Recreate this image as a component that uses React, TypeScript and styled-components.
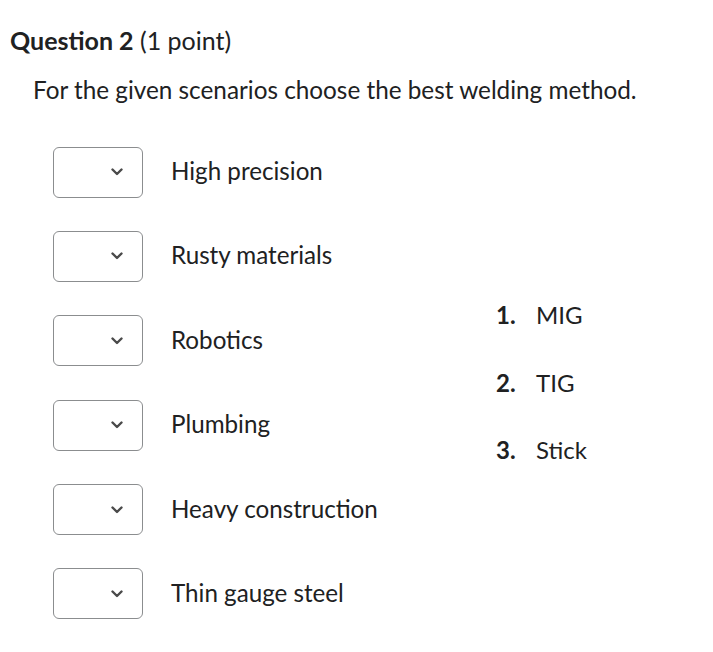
import React from "react";
import styled, { createGlobalStyle } from "styled-components";

const Global = createGlobalStyle`
  html, body { margin: 0; padding: 0; background: #fff; }
  body { font-family: Lato, "Noto Sans", sans-serif; color: #202122; }
`;

const Page = styled.div`
  width: 713px;
  height: 652px;
  box-sizing: border-box;
  padding: 24px 0 0 10px;
`;

const Title = styled.h2`
  margin: 0;
  font-size: 25px;
  line-height: 32px;
  font-weight: 400;
  color: #202122;
  b { font-weight: 700; }
`;

const Prompt = styled.p`
  margin: 18px 0 0 23px;
  font-size: 24.3px;
  line-height: 32px;
`;

const Body = styled.div`
  display: flex;
  margin-top: 41px;
  padding-left: 43px;
`;

const LeftCol = styled.div`
  display: flex;
  flex-direction: column;
  gap: 34.4px;
  width: 443px;
`;

const Row = styled.div`
  display: flex;
  align-items: center;
  gap: 28px;
  height: 50px;
`;

const SelectBox = styled.div`
  width: 90px;
  height: 51px;
  box-sizing: border-box;
  border: 1px solid #8b8d8f;
  border-radius: 6px;
  display: flex;
  align-items: center;
  justify-content: flex-end;
  padding-right: 19px;
`;

const Label = styled.span`
  font-size: 24.2px;
  line-height: 32px;
  margin-top: -2px;
`;

const Choices = styled.ol`
  list-style: none;
  margin: 152px 0 0 0;
  padding: 0;
  display: flex;
  flex-direction: column;
  gap: 35.5px;
`;

const Choice = styled.li`
  display: flex;
  font-size: 24px;
  line-height: 32px;
`;

const Num = styled.span`
  width: 40px;
  font-weight: 700;
`;

const Chevron = () => (
  <svg width="12" height="8" viewBox="0 0 12 8">
    <path d="M1.5 1.5 L6 6 L10.5 1.5" fill="none" stroke="#4a4a4a" strokeWidth="2.4" strokeLinecap="round" strokeLinejoin="round" />
  </svg>
);

const items = [
  "High precision",
  "Rusty materials",
  "Robotics",
  "Plumbing",
  "Heavy construction",
  "Thin gauge steel",
];

const choices = ["MIG", "TIG", "Stick"];

export default function App() {
  return (
    <Page>
      <Global />
      <Title>
        <b>Question 2</b> (1 point)
      </Title>
      <Prompt>For the given scenarios choose the best welding method.</Prompt>
      <Body>
        <LeftCol>
          {items.map((t) => (
            <Row key={t}>
              <SelectBox>
                <Chevron />
              </SelectBox>
              <Label>{t}</Label>
            </Row>
          ))}
        </LeftCol>
        <Choices>
          {choices.map((c, i) => (
            <Choice key={c}>
              <Num>{i + 1}.</Num>
              <span>{c}</span>
            </Choice>
          ))}
        </Choices>
      </Body>
    </Page>
  );
}
